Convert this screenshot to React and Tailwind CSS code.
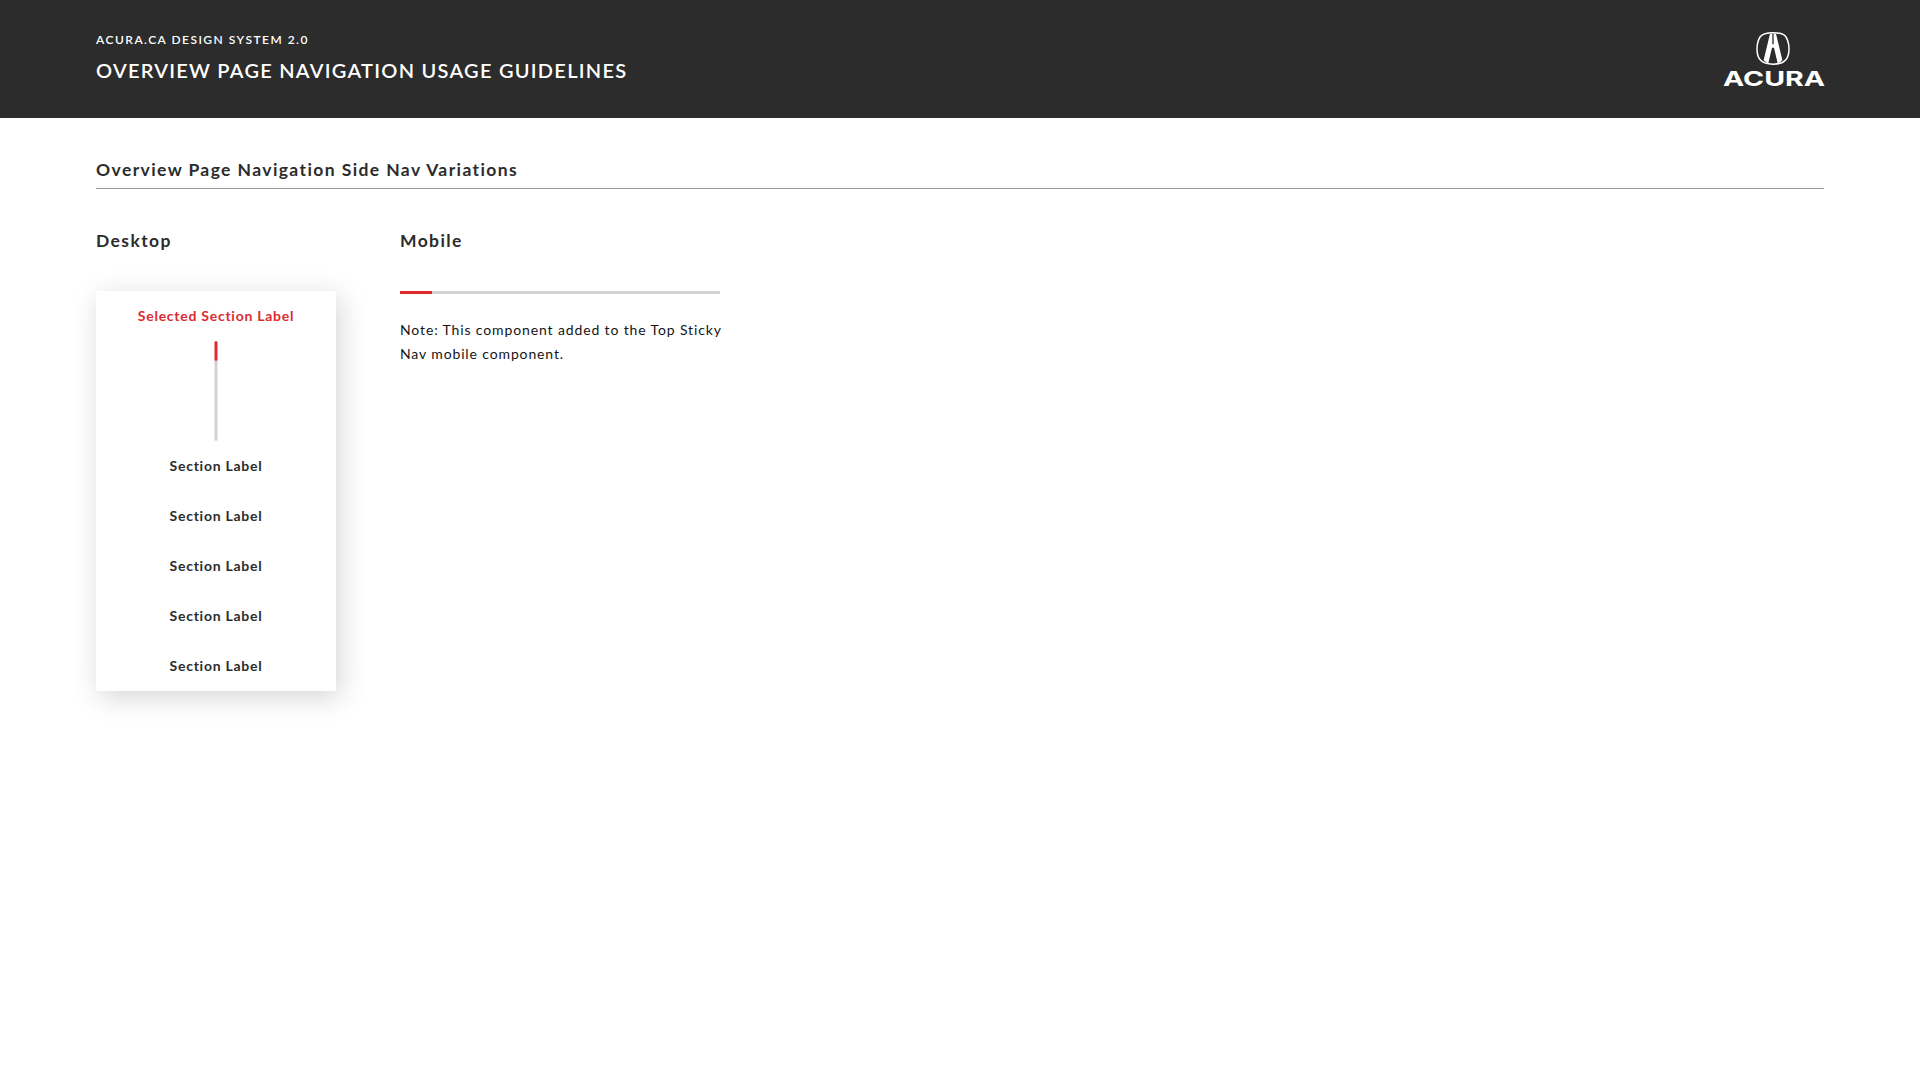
const sections = [1, 2, 3, 4, 5];

function AcuraLogo() {
    return (
        <svg className="w-[104px] h-[62px]" viewBox="-6 0 312 186" fill="none" aria-label="Acura">
            {/* emblem */}
            <path
                d="M147 5C167 5 180 8 186 18C192 28 195 40 195 54C195 68 192 80 184 88C177 96 165 99.500 147 99.500C129 99.500 117 96 110 88C102 80 99 68 99 54C99 40 102 28 108 18C114 8 127 5 147 5Z"
                stroke="white"
                strokeWidth="4.500"
            />
            <path
                d="M138 8H145V40H149V8H156L175 87C171 92 167 95 161 97L150 50H144L133 97C127 95 123 92 119 87Z"
                fill="white"
            />
            <text
                x="-3"
                y="165"
                fill="white"
                fontSize="62"
                fontWeight="700"
                fontFamily="Inter, sans-serif"
                textLength="306"
                lengthAdjust="spacingAndGlyphs"
            >
                ACURA
            </text>
        </svg>
    );
}

function Header() {
    return (
        <header className="flex justify-between h-[118px] px-24 bg-[#2c2c2c] text-white">
            <div className="pt-[30px]">
                <p className="text-xs leading-5 font-semibold tracking-[1.48px]">ACURA.CA DESIGN SYSTEM 2.0</p>
                <h1 className="mt-[5px] text-xl leading-[30px] font-semibold tracking-[1.27px]">
                    OVERVIEW PAGE NAVIGATION USAGE GUIDELINES
                </h1>
            </div>
            <div className="pt-[31px] -mr-0.5">
                <AcuraLogo />
            </div>
        </header>
    );
}

function SideNav() {
    return (
        <nav className="w-60 h-[400px] bg-white shadow-[4px_6px_26px_rgba(0,0,0,0.17)] text-sm font-bold tracking-[0.74px] text-center text-[#2c2c2c]">
            <div className="h-[50px] leading-[50px] text-[#dc2a30]">Selected Section Label</div>
            <div className="mx-auto w-1 h-[100px] rounded-full bg-[#d1d3d2] border-x border-[#e8e9e9]">
                <div className="-mx-px h-5 rounded-full bg-[#dc2a30] border-x border-[#ed9498]" />
            </div>
            {sections.map(section => (
                <div key={section} className="h-[50px] leading-[50px]">Section Label</div>
            ))}
        </nav>
    );
}

function MobileNav() {
    return (
        <div className="h-[3px] w-80 bg-[#d2d4d3]">
            <div className="h-full w-8 bg-[#dc2a2c]" />
        </div>
    );
}

export default function App() {
    return (
        <div className="min-h-screen bg-white font-['Lato',sans-serif]">
            <Header />
            <main className="px-24 pt-[37px] text-[#2c2c2c]">
                <h2 className="h-[34px] leading-[30px] text-[17.5px] font-bold tracking-[1.4px] border-b border-[#9a9a9a]">
                    Overview Page Navigation Side Nav Variations
                </h2>
                <div className="flex gap-16 pt-[37px]">
                    <section className="w-60">
                        <h3 className="mb-[35px] leading-[30px] text-[17.5px] font-bold tracking-[1.4px]">Desktop</h3>
                        <SideNav />
                    </section>
                    <section>
                        <h3 className="mb-[35px] leading-[30px] text-[17.5px] font-bold tracking-[1.4px]">Mobile</h3>
                        <MobileNav />
                        <p className="mt-6 text-sm leading-6 tracking-[0.87px] text-[#151515] whitespace-nowrap">
                            Note: This component added to the Top Sticky
                            <br />
                            Nav mobile component.
                        </p>
                    </section>
                </div>
            </main>
        </div>
    );
}
